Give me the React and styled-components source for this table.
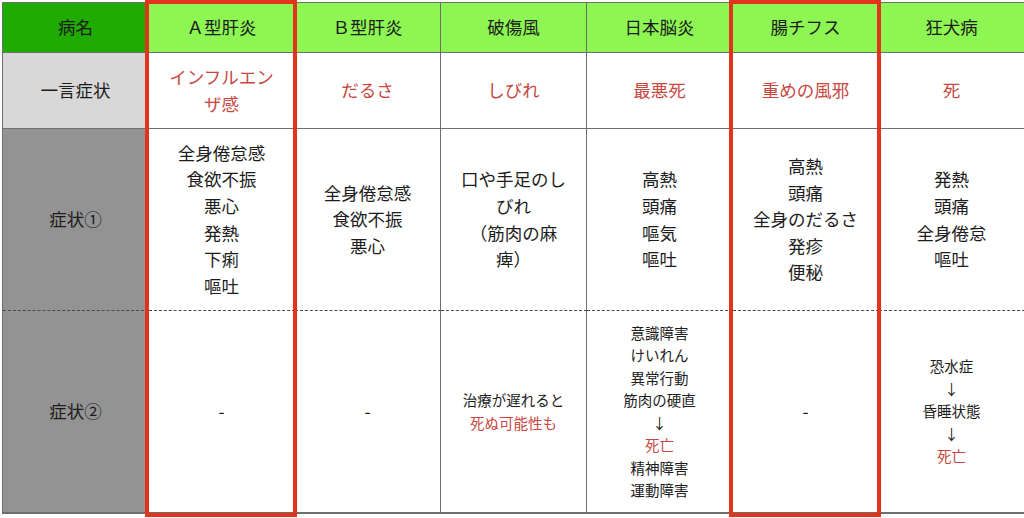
import React from "react";
import styled, { createGlobalStyle, css } from "styled-components";

const Global = createGlobalStyle`
  html, body { margin: 0; padding: 0; background: #ffffff; }
  body {
    font-family: "Noto Sans CJK JP", "Noto Sans", sans-serif;
    color: #1c1c1c;
    -webkit-font-smoothing: antialiased;
    text-spacing-trim: space-all;
  }
`;

const Page = styled.div`
  width: 1024px;
  height: 518px;
  padding: 2px 0 0 2px;
  box-sizing: border-box;
  overflow: hidden;
`;

const Table = styled.div`
  display: flex;
  border-left: 1px solid #6e6e6e;
  border-top: 1px solid #6e6e6e;
  width: max-content;
`;

const Column = styled.div`
  display: flex;
  flex-direction: column;
  width: 146px;
  position: relative;
  ${(p) =>
    p.$highlight &&
    css`
      &::after {
        content: "";
        position: absolute;
        top: -3px;
        bottom: -3px;
        left: -4px;
        right: -2px;
        border: 4.5px solid #e0341c;
        pointer-events: none;
        z-index: 2;
      }
    `}
`;

const rowHeights = { head: 49, one: 75, sym1: 181, sym2: 201 };

const Cell = styled.div`
  box-sizing: content-box;
  height: ${(p) => rowHeights[p.$row]}px;
  display: flex;
  align-items: center;
  justify-content: center;
  text-align: center;
  padding: 0 16px;
  border-right: 1px solid #6e6e6e;
  border-bottom: ${(p) =>
    p.$row === "sym1"
      ? "1px dashed #4a4a4a"
      : p.$row === "sym2"
      ? "2px solid #6e6e6e"
      : "1px solid #6e6e6e"};
  background: ${(p) => p.$bg || "#ffffff"};
  font-size: ${(p) => (p.$small ? "14.5px" : "17.5px")};
  line-height: ${(p) => (p.$small ? "22.5px" : "26.6px")};
  color: ${(p) => (p.$red ? "#c9473f" : "#1c1c1c")};
  text-spacing-trim: space-all;
`;

const Lines = styled.div`
  display: flex;
  flex-direction: column;
  align-items: center;
`;

const Line = styled.span`
  display: block;
  color: ${(p) => (p.$red ? "#c9473f" : "inherit")};
`;

const labels = {
  head: "病名",
  one: "一言症状",
  sym1: "症状①",
  sym2: "症状②",
};

const labelBg = {
  head: "#1fab00",
  one: "#d8d8d8",
  sym1: "#939393",
  sym2: "#939393",
};

const diseases = [
  {
    name: "Ａ型肝炎",
    one: "インフルエンザ感",
    sym1: ["全身倦怠感", "食欲不振", "悪心", "発熱", "下痢", "嘔吐"],
    sym2: ["-"],
    highlight: true,
  },
  {
    name: "Ｂ型肝炎",
    one: "だるさ",
    sym1: ["全身倦怠感", "食欲不振", "悪心"],
    sym2: ["-"],
  },
  {
    name: "破傷風",
    one: "しびれ",
    sym1Text: ["口や手足のしびれ", "（筋肉の麻痺）"],
    sym2: ["治療が遅れると", { t: "死ぬ可能性も", red: true }],
    sym2Small: true,
  },
  {
    name: "日本脳炎",
    one: "最悪死",
    sym1: ["高熱", "頭痛", "嘔気", "嘔吐"],
    sym2: [
      "意識障害",
      "けいれん",
      "異常行動",
      "筋肉の硬直",
      "↓",
      { t: "死亡", red: true },
      "精神障害",
      "運動障害",
    ],
    sym2Small: true,
  },
  {
    name: "腸チフス",
    one: "重めの風邪",
    sym1: ["高熱", "頭痛", "全身のだるさ", "発疹", "便秘"],
    sym2: ["-"],
    highlight: true,
  },
  {
    name: "狂犬病",
    one: "死",
    sym1: ["発熱", "頭痛", "全身倦怠", "嘔吐"],
    sym2: ["恐水症", "↓", "昏睡状態", "↓", { t: "死亡", red: true }],
    sym2Small: true,
  },
];

function renderLines(items) {
  return (
    <Lines>
      {items.map((it, i) =>
        typeof it === "string" ? (
          <Line key={i}>{it}</Line>
        ) : (
          <Line key={i} $red={it.red}>
            {it.t}
          </Line>
        )
      )}
    </Lines>
  );
}

export default function App() {
  return (
    <>
      <Global />
      <Page>
        <Table>
          <Column>
            {Object.keys(labels).map((r) => (
              <Cell key={r} $row={r} $bg={labelBg[r]}>
                {labels[r]}
              </Cell>
            ))}
          </Column>
          {diseases.map((d) => (
            <Column key={d.name} $highlight={d.highlight}>
              <Cell $row="head" $bg="#8df652">
                {d.name}
              </Cell>
              <Cell $row="one" $red>
                <div>{d.one}</div>
              </Cell>
              <Cell $row="sym1">
                {d.sym1Text ? (
                  <div>
                    {d.sym1Text[0]}
                    <br />
                    {d.sym1Text[1]}
                  </div>
                ) : (
                  renderLines(d.sym1)
                )}
              </Cell>
              <Cell $row="sym2" $small={d.sym2Small}>
                {renderLines(d.sym2)}
              </Cell>
            </Column>
          ))}
        </Table>
      </Page>
    </>
  );
}
